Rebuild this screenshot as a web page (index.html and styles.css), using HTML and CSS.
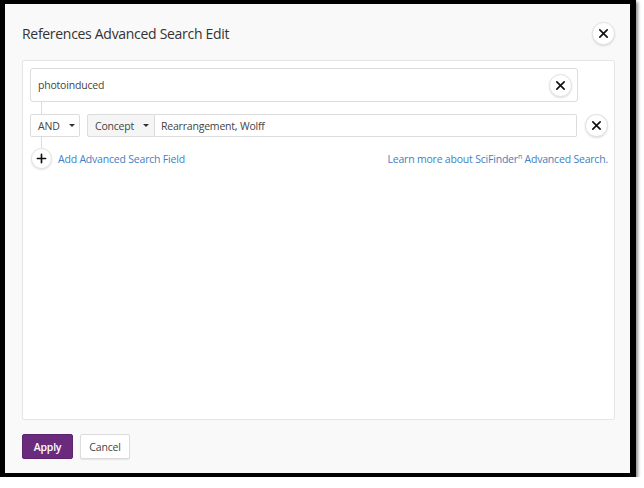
FILE: index.html
```html
<!DOCTYPE html>
<html>
<head>
<meta charset="utf-8">
<link rel="stylesheet" href="styles.css">
</head>
<body>
<div class="frame">
  <div class="dialog">
    <div class="header">
      <h1 class="title">References Advanced Search Edit</h1>
      <button class="circle-btn close-btn" aria-label="Close">
        <svg viewBox="0 0 12 12" width="11" height="11"><path d="M2 2L10 10M10 2L2 10" stroke="#111" stroke-width="1.8" stroke-linecap="round"/></svg>
      </button>
    </div>
    <div class="panel">
      <div class="search-row">
        <div class="search-box">
          <span class="search-text">photoinduced</span>
          <button class="circle-btn clear-btn" aria-label="Clear">
            <svg viewBox="0 0 12 12" width="11" height="11"><path d="M2 2L10 10M10 2L2 10" stroke="#111" stroke-width="1.8" stroke-linecap="round"/></svg>
          </button>
        </div>
      </div>
      <div class="connector"></div>
      <div class="field-row">
        <div class="field-main">
          <div class="dropdown op">AND <span class="caret"></span></div>
          <div class="combo">
            <div class="dropdown type">Concept <span class="caret"></span></div>
            <div class="value">Rearrangement, Wolff</div>
          </div>
        </div>
        <button class="circle-btn remove-btn" aria-label="Remove">
          <svg viewBox="0 0 12 12" width="11" height="11"><path d="M2 2L10 10M10 2L2 10" stroke="#111" stroke-width="1.8" stroke-linecap="round"/></svg>
        </button>
      </div>
      <div class="connector short"></div>
      <div class="add-row">
        <div class="add-left">
          <button class="circle-btn plus-btn" aria-label="Add">
            <svg viewBox="0 0 12 12" width="11" height="11"><path d="M6 1.5V10.5M1.5 6H10.5" stroke="#111" stroke-width="1.8" stroke-linecap="round"/></svg>
          </button>
          <a class="link" href="#">Add Advanced Search Field</a>
        </div>
        <a class="link" href="#">Learn more about SciFinder<sup class="sup">n</sup> Advanced Search.</a>
      </div>
    </div>
    <div class="footer">
      <button class="btn btn-primary">Apply</button>
      <button class="btn btn-default">Cancel</button>
    </div>
  </div>
</div>
</body>
</html>
```
FILE: styles.css
```css
* { box-sizing: border-box; }
html, body { margin: 0; padding: 0; background: #ffffff; }
body { font-family: "Open Sans", "Liberation Sans", sans-serif; }

.frame {
  width: 636px;
  height: 477px;
  border-style: solid;
  border-color: #000;
  border-width: 4px 6px 4px 5px;
  box-shadow: 2px 2px 3px rgba(0,0,0,0.45);
  background: #f9f9f9;
}

.dialog {
  height: 100%;
  display: flex;
  flex-direction: column;
  padding: 0 15px 0 17px;
}

.header {
  height: 56px;
  display: flex;
  align-items: center;
  justify-content: space-between;
  padding-top: 2px;
}
.title {
  margin: 0;
  font-size: 14px;
  font-weight: 400;
  color: #333;
  letter-spacing: -0.3px;
}

.circle-btn {
  width: 23px;
  height: 23px;
  border-radius: 50%;
  border: 1px solid #e2e2e2;
  background: #fff;
  box-shadow: 0 1px 2px rgba(0,0,0,0.12);
  display: flex;
  align-items: center;
  justify-content: center;
  padding: 0;
  cursor: pointer;
}

.panel {
  height: 360px;
  background: #fff;
  border: 1px solid #e6e6e6;
  border-radius: 2px;
  padding: 7px 6px 7px 7px;
  display: flex;
  flex-direction: column;
}

.search-row { padding-right: 30px; }
.search-box {
  height: 34px;
  border: 1px solid #dcdcdc;
  border-radius: 3px;
  display: flex;
  align-items: center;
  justify-content: space-between;
  padding: 0 5px 0 7px;
}
.search-text { font-size: 10.5px; letter-spacing: -0.2px; color: #444; }

.connector {
  width: 1px;
  height: 12px;
  margin-left: 11px;
  background: #dcdcdc;
}
.connector.short { height: 11px; }

.field-row {
  display: flex;
  align-items: center;
  height: 23px;
}
.field-main {
  width: 548px;
  display: flex;
  gap: 7px;
  height: 23px;
}
.dropdown {
  height: 23px;
  display: flex;
  align-items: center;
  font-size: 10.5px;
  letter-spacing: -0.2px;
  color: #444;
  border: 1px solid #dcdcdc;
  border-radius: 2px;
}
.dropdown.op {
  width: 50px;
  padding-left: 7px;
  background: #fff;
}
.caret {
  display: inline-block;
  width: 0; height: 0;
  border-left: 3px solid transparent;
  border-right: 3px solid transparent;
  border-top: 3px solid #333;
  margin-left: 9px;
}
.combo {
  flex: 1;
  display: flex;
  height: 23px;
}
.dropdown.type {
  width: 68px;
  padding-left: 7px;
  background: #f5f5f5;
  border-radius: 2px 0 0 2px;
}
.value {
  flex: 1;
  height: 23px;
  border: 1px solid #dcdcdc;
  border-left: none;
  border-radius: 0 2px 2px 0;
  display: flex;
  align-items: center;
  padding-left: 6px;
  font-size: 10.5px;
  letter-spacing: -0.2px;
  color: #444;
}
.remove-btn { margin-left: 8px; }

.add-row {
  display: flex;
  align-items: center;
  justify-content: space-between;
  height: 21px;
  padding-left: 1px;
}
.add-left { display: flex; align-items: center; gap: 6px; }
.plus-btn { width: 21px; height: 21px; }
.link {
  font-size: 10.5px;
  letter-spacing: -0.2px;
  color: #3f80c2;
  text-decoration: none;
}
.sup { font-size: 7px; vertical-align: 4px; line-height: 0; }

.footer {
  flex: 1;
  display: flex;
  align-items: center;
  gap: 7px;
  padding-bottom: 0;
}
.btn {
  height: 25px;
  font-family: inherit;
  font-size: 10.5px;
  letter-spacing: -0.2px;
  border-radius: 2px;
  padding: 0;
  cursor: pointer;
}
.btn-primary {
  width: 51px;
  background: #6b2b7d;
  color: #fff;
  border: 1px solid #5f2470;
  font-weight: 600;
}
.btn-default {
  width: 50px;
  background: #fff;
  color: #444;
  border: 1px solid #dcdcdc;
  box-shadow: 0 1px 1px rgba(0,0,0,0.08);
}
```
